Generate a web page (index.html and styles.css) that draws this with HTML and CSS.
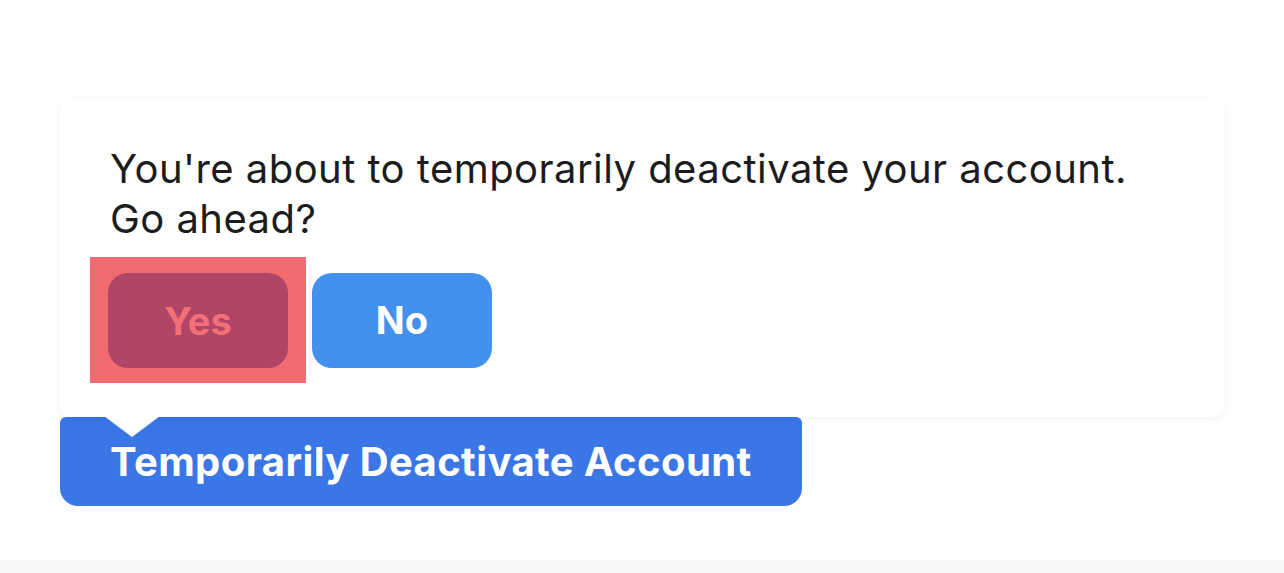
FILE: index.html
```html
<!DOCTYPE html>
<html lang="en">
<head>
    <meta charset="UTF-8">
    <title>Deactivate Account</title>
    <link rel="stylesheet" href="styles.css">
</head>
<body>
    <main class="page">
        <section class="confirm-pop" role="dialog" aria-label="Confirm deactivation">
            <p class="confirm-text">You're about to temporarily deactivate your account.<br>Go ahead?</p>
            <div class="confirm-actions">
                <div class="highlight">
                    <button class="btn btn-yes" type="button">Yes</button>
                </div>
                <button class="btn btn-no" type="button">No</button>
            </div>
            <span class="pop-arrow" aria-hidden="true"></span>
        </section>
        <button class="deactivate-btn" type="button">Temporarily Deactivate Account</button>
    </main>
    <footer class="bottom-strip"></footer>
</body>
</html>
```

FILE: styles.css
```css
body {
    margin: 0;
    background: #fff;
    font-family: Inter, 'Liberation Sans', Arial, sans-serif;
    height: 573px;
    overflow: hidden;
    display: flex;
    flex-direction: column;
}
.page {
    flex-grow: 1;
    padding: 100px 60px 0 60px;
}
.confirm-pop {
    position: relative;
    width: 1164px;
    height: 317px;
    box-sizing: border-box;
    padding: 44px 50px 0 50px;
    background: #fff;
    border-radius: 10px;
    box-shadow: 0 2px 10px rgba(0,0,0,0.05);
}
.confirm-text {
    margin: 0;
    font-size: 40px;
    letter-spacing: 0.45px;
    line-height: 50px;
    color: #1c1c1e;
}
.confirm-actions {
    display: flex;
    align-items: center;
    margin-top: 13px;
    margin-left: -20px;
}
.highlight {
    background: #f06b70;
    padding: 16px 18px 15px 18px;
}
.btn {
    width: 180px;
    height: 95px;
    border: none;
    border-radius: 20px;
    font-family: inherit;
    font-size: 38px;
    font-weight: 700;
}
.btn-yes {
    background: #b04566;
    color: #f27075;
}
.btn-no {
    margin-left: 6px;
    background: #4391ec;
    color: #fff;
}
.pop-arrow {
    position: absolute;
    left: 44px;
    bottom: -20px;
    width: 0;
    height: 0;
    border-left: 28px solid transparent;
    border-right: 28px solid transparent;
    border-top: 21px solid #fff;
    z-index: 2;
}
.deactivate-btn {
    display: block;
    width: 742px;
    height: 89px;
    padding: 0 0 0 50px;
    text-align: left;
    border: none;
    border-radius: 6px 6px 18px 18px;
    background: #3a76e6;
    color: #fff;
    font-family: inherit;
    font-size: 40px;
    letter-spacing: 0.4px;
    font-weight: 700;
}
.bottom-strip {
    height: 13px;
    background: #f7f7f7;
}
```
